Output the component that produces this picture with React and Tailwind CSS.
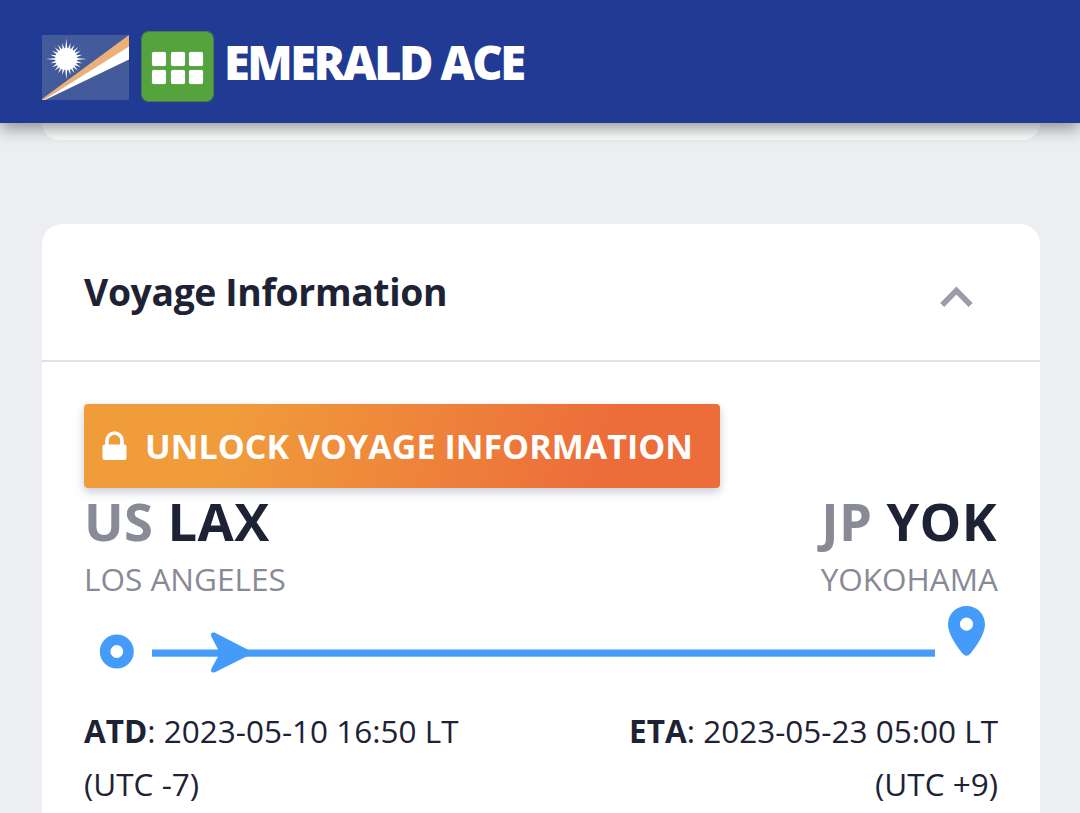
import React from "react";

const rays = Array.from({ length: 24 }, (_, i) => {
  const a = (i * Math.PI) / 12;
  const r = i % 6 === 0 ? 20.5 : 16.5;
  const w = 0.11;
  const p = (rad, ang) => `${24.3 + rad * Math.sin(ang)},${24 - rad * Math.cos(ang)}`;
  return `${p(10, a - w)} ${p(r, a)} ${p(10, a + w)}`;
});

function Flag() {
  return (
    <svg className="mt-[4px] block h-[65px] w-[87px]" viewBox="0 0 87 65">
      <rect width="87" height="65" fill="#445b9b" />
      <path d="M0 64 L87 0 V12 L1.5 65 H0Z" fill="#ebaf78" />
      <path d="M1.5 65 L87 11.5 V24.5 L3 65Z" fill="#fff" />
      <circle cx="24.3" cy="24" r="11" fill="#fff" />
      {rays.map((r) => (
        <polygon key={r} points={r} fill="#fff" />
      ))}
    </svg>
  );
}

function ShipType() {
  return (
    <div className="mt-px ml-[13px] grid h-[69px] w-[71px] grid-cols-[14px_14px_14px] grid-rows-[14px_14px] place-content-center gap-x-[4.5px] gap-y-[4px] rounded-[6px] bg-[#54a33d] pt-[2px] outline outline-[#4a7a55]">
      {[0, 1, 2, 3, 4, 5].map((i) => (
        <span key={i} className="rounded-[2px] bg-white shadow-[0_0_1px_#ddd]" />
      ))}
    </div>
  );
}

function Place({ country, code, city, right }) {
  return (
    <div className={right ? "text-right" : ""}>
      <div className={"mt-px h-[64px] text-[52.5px] leading-[64px] font-bold tracking-[0.4px] whitespace-nowrap " + (right ? "pr-px" : "")}>
        <span className="text-[#888a95]">{country}</span> {code}
      </div>
      <div className="h-[49px] text-[31.5px] leading-[51px] whitespace-nowrap text-[#888a95]">{city}</div>
    </div>
  );
}

export default function App() {
  return (
    <div className="flex h-[813px] w-[1080px] flex-col overflow-hidden bg-[#edeef2] font-['Open_Sans',sans-serif] text-[#1e2235]">
      <header className="relative z-10 flex h-[123px] shrink-0 items-start bg-[#213b95] pt-[31px] pl-[42px] shadow-[0_5px_16px_rgba(0,0,0,0.42)]">
        <Flag />
        <ShipType />
        <h1 className="mt-px ml-[11px] text-[47px] leading-[60px] font-extrabold tracking-[-2.55px] whitespace-nowrap text-white">EMERALD ACE</h1>
      </header>
      <div className="mx-[42px] mr-[40px] h-[17px] shrink-0 rounded-b-[20px] bg-white/80" />
      <section className="mt-[83.5px] mr-[40px] ml-[42px] flex h-[620px] shrink-0 flex-col rounded-t-[20px] bg-white">
        <div className="flex h-[138px] shrink-0 items-start justify-between border-b-2 border-[#e1e2e9] pr-[67px] pl-[42px]">
          <h2 className="mt-[43.5px] text-[37.3px] leading-[50px] font-bold tracking-[-0.36px] whitespace-nowrap">Voyage Information</h2>
          <svg className="mt-[61px] h-[24px] w-[33px]" viewBox="0 0 33 24">
            <path d="M2.2 20 L16.4 5.6 L30.6 20" fill="none" stroke="#9b9ca7" strokeWidth="5.6" />
          </svg>
        </div>
        <div className="flex flex-col px-[42px] pt-[42.5px]">
          <button className="flex h-[84px] w-[636px] items-center rounded-[4px] bg-[linear-gradient(105deg,#f09c3b_23%,#ec6c3a_82%)] pl-[18px] text-white shadow-[0_4px_10px_rgba(40,50,90,0.25)]">
            <svg className="mr-[18px] h-[30px] w-[25px]" viewBox="0 0 25 30">
              <path d="M5 15 V9.5 a7.5 7.5 0 0 1 15 0 V15" fill="none" stroke="#fff" strokeWidth="3.6" />
              <rect x="0.5" y="13.5" width="24" height="15.5" rx="2" fill="#fff" />
            </svg>
            <span className="text-[34px] leading-[50px] font-bold tracking-[0.03px] whitespace-nowrap">UNLOCK VOYAGE INFORMATION</span>
          </button>
          <div className="flex justify-between">
            <Place country="US" code="LAX" city="LOS ANGELES" />
            <Place country="JP" code="YOK" city="YOKOHAMA" right />
          </div>
          <svg className="block h-[78px] w-[914px]" viewBox="84 602 914 78">
            <circle cx="116.8" cy="651.5" r="11.7" fill="none" stroke="#459bf9" strokeWidth="10.6" />
            <rect x="152" y="649.5" width="783" height="7.2" fill="#459bf9" />
            <path d="M214.5 632.5 L249 650.3 Q251 652.8 249 655.2 L214.5 672.5 Q209.5 673 211.5 668.5 L218.5 655.5 Q219.5 652.8 218.5 650.2 L211.5 637 Q209.5 632 214.5 632.5Z" fill="#459bf9" />
            <path fillRule="evenodd" d="M966.5 606 C956 606 948 614 948 624.5 C948 633 955 644.5 962.5 653.5 Q966.5 658 970.5 653.5 C978 644.5 985 633 985 624.5 C985 614 977 606 966.5 606Z M966.5 617.5 a6.6 6.6 0 1 1 0 13.2 a6.6 6.6 0 1 1 0 -13.2Z" fill="#459bf9" />
          </svg>
          <div className="mt-[24px] flex justify-between text-[31.5px] leading-[53px] whitespace-nowrap">
            <div>
              <b>ATD</b>: 2023-05-10 16:50 LT<br />(UTC -7)
            </div>
            <div className="text-right">
              <b>ETA</b>: 2023-05-23 05:00 LT<br />(UTC +9)
            </div>
          </div>
        </div>
      </section>
    </div>
  );
}
